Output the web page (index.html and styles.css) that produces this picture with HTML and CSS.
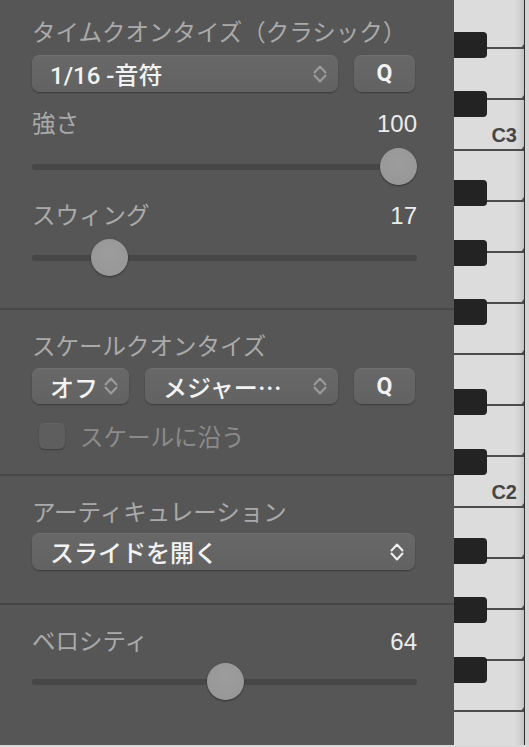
FILE: index.html
```html
<!DOCTYPE html>
<html lang="ja">
<head>
<meta charset="utf-8">
<title>Quantize</title>
<link rel="stylesheet" href="styles.css">
</head>
<body>
<div class="app">
  <div class="panel">
    <section class="sec sec-time">
      <div class="title">タイムクオンタイズ（クラシック）</div>
      <div class="ctrl-row">
        <div class="popup popup-grow">
          <span class="popup-text">1/16 -音符</span>
          <svg class="chev" width="14" height="20" viewBox="0 0 14 20"><polyline points="1.5,8.5 7,2.5 12.5,8.5"/><polyline points="1.5,11.5 7,17.5 12.5,11.5"/></svg>
        </div>
        <div class="btn-q">Q</div>
      </div>
      <div class="label-row row-strength"><span class="label">強さ</span><span class="value">100</span></div>
      <div class="slider slider-strength"><div class="track"></div><div class="thumb" style="left:348px"></div></div>
      <div class="label-row row-swing"><span class="label">スウィング</span><span class="value">17</span></div>
      <div class="slider slider-swing"><div class="track"></div><div class="thumb" style="left:59px"></div></div>
    </section>

    <section class="sec sec-scale">
      <div class="title">スケールクオンタイズ</div>
      <div class="ctrl-row ctrl-row-scale">
        <div class="popup popup-off">
          <span class="popup-text">オフ</span>
          <svg class="chev" width="14" height="20" viewBox="0 0 14 20"><polyline points="1.5,8.5 7,2.5 12.5,8.5"/><polyline points="1.5,11.5 7,17.5 12.5,11.5"/></svg>
        </div>
        <div class="popup popup-grow">
          <span class="popup-text">メジャー<span class="ell">…</span></span>
          <svg class="chev" width="14" height="20" viewBox="0 0 14 20"><polyline points="1.5,8.5 7,2.5 12.5,8.5"/><polyline points="1.5,11.5 7,17.5 12.5,11.5"/></svg>
        </div>
        <div class="btn-q">Q</div>
      </div>
      <div class="check-row">
        <span class="checkbox"></span>
        <span class="check-label">スケールに沿う</span>
      </div>
    </section>

    <section class="sec sec-artic">
      <div class="title">アーティキュレーション</div>
      <div class="ctrl-row ctrl-row-artic">
        <div class="popup popup-grow">
          <span class="popup-text">スライドを開く</span>
          <svg class="chev chev-bright" width="14" height="20" viewBox="0 0 14 20"><polyline points="1.5,8.5 7,2.5 12.5,8.5"/><polyline points="1.5,11.5 7,17.5 12.5,11.5"/></svg>
        </div>
      </div>
    </section>

    <section class="sec sec-vel">
      <div class="label-row row-vel"><span class="label">ベロシティ</span><span class="value">64</span></div>
      <div class="slider slider-vel"><div class="track"></div><div class="thumb" style="left:175px"></div></div>
    </section>
  </div>

  <div class="piano">
    <div class="keys">
      <div class="wkey wkey-top"></div>
      <div class="wkey"></div>
      <div class="wkey"><span class="note">C3</span></div>
      <div class="wkey"></div>
      <div class="wkey"></div>
      <div class="wkey"></div>
      <div class="wkey"></div>
      <div class="wkey"></div>
      <div class="wkey"></div>
      <div class="wkey"><span class="note">C2</span></div>
      <div class="wkey"></div>
      <div class="wkey"></div>
      <div class="wkey"></div>
      <div class="wkey"></div>
      <div class="wkey wkey-last"></div>

      <div class="bkey" style="top:32px"></div>
      <div class="bkey" style="top:91px"></div>
      <div class="bkey" style="top:180px"></div>
      <div class="bkey" style="top:240px"></div>
      <div class="bkey" style="top:299px"></div>
      <div class="bkey" style="top:389px"></div>
      <div class="bkey" style="top:449px"></div>
      <div class="bkey" style="top:538px"></div>
      <div class="bkey" style="top:597px"></div>
      <div class="bkey" style="top:657px"></div>
    </div>
    <div class="edge"></div>
    <div class="rim"></div>
  </div>
</div>
</body>
</html>
```

FILE: styles.css
```css
html, body {
  margin: 0;
  padding: 0;
}
body {
  background: #d9d9d9;
  width: 529px;
  height: 747px;
  overflow: hidden;
}
.app {
  display: flex;
  height: 745px;
  width: 529px;
}
.panel {
  width: 454px;
  background: #565656;
  display: flex;
  flex-direction: column;
  font-family: "Noto Sans CJK JP", sans-serif;
}
.sec {
  display: flex;
  flex-direction: column;
  padding-left: 32px;
  padding-right: 37px;
  border-bottom: 2px solid #474747;
}
.sec-time { padding-top: 17px; padding-bottom: 32px; }
.sec-scale { padding-top: 21px; padding-bottom: 25px; }
.sec-artic { padding-top: 21px; padding-bottom: 33px; }
.sec-vel { padding-top: 21px; border-bottom: none; flex: 1; }

.title, .label {
  font-size: 23.5px;
  line-height: 28px;
  height: 28px;
  color: #aaaaaa;
  white-space: nowrap;
}
.ctrl-row {
  display: flex;
  gap: 16px;
  margin-top: 10px;
  margin-right: 2px;
  height: 37px;
}
.ctrl-row-scale { margin-top: 9px; height: 36px; }
.ctrl-row-artic { margin-top: 8px; }

.popup, .btn-q {
  background: linear-gradient(#686868, #626262);
  border-radius: 8px;
  box-shadow: 0 1px 1.5px rgba(0,0,0,0.35), inset 0 0.5px 0 rgba(255,255,255,0.12);
  display: flex;
  align-items: center;
  color: #f2f2f2;
  font-family: Roboto, "Noto Sans CJK JP", sans-serif;
  font-weight: 500;
  font-size: 24px;
}
.popup {
  padding: 0 11px 0 18px;
}
.popup-grow { flex: 1; }
.popup-off { width: 97px; box-sizing: border-box; flex: none; }
.popup-text {
  flex: 1;
  white-space: nowrap;
  overflow: hidden;
}
.ell {
  font-family: "Noto Sans CJK JP", sans-serif;
}
.chev {
  flex: none;
  fill: none;
  stroke: #9c9c9c;
  stroke-width: 2;
  stroke-linecap: round;
  stroke-linejoin: round;
}
.chev-bright { stroke: #f0f0f0; }
.btn-q {
  width: 61px;
  flex: none;
  justify-content: center;
  font-weight: 700;
  font-size: 23px;
}

.label-row {
  display: flex;
  align-items: baseline;
  justify-content: space-between;
  height: 28px;
}
.row-strength { margin-top: 16px; }
.row-swing { margin-top: 15px; }
.value {
  font-family: "Liberation Sans", sans-serif;
  font-size: 24px;
  color: #ececec;
}

.slider {
  position: relative;
  height: 37px;
  display: flex;
  align-items: center;
}
.slider-strength { margin-top: 12px; }
.slider-swing { margin-top: 11px; }
.slider-vel { margin-top: 9px; }
.track {
  flex: 1;
  height: 6px;
  border-radius: 3px;
  background: #474747;
}
.thumb {
  position: absolute;
  top: 0;
  width: 37px;
  height: 37px;
  border-radius: 50%;
  background: radial-gradient(circle at 50% 40%, #9d9d9d, #959595);
  box-shadow: 0 1px 2px rgba(0,0,0,0.45);
}

.check-row {
  display: flex;
  align-items: center;
  margin-top: 19px;
  padding-left: 7px;
  height: 26px;
  gap: 15px;
}
.checkbox {
  width: 26px;
  height: 26px;
  border-radius: 6px;
  background: #5e5e5e;
  box-shadow: 0 1px 1.5px rgba(0,0,0,0.3), inset 0 0.5px 0 rgba(255,255,255,0.08);
}
.check-label {
  font-size: 23.5px;
  line-height: 28px;
  color: #8b8b8b;
}

.piano {
  flex: 1;
  display: flex;
}
.keys {
  position: relative;
  width: 70px;
  display: flex;
  flex-direction: column;
}
.wkey {
  position: relative;
  flex: none;
  border-bottom: 2px solid #4c4c4c;
  background: linear-gradient(to right, #dcdcdd 86%, #d2d2d3 94%, #c2c2c3);
  display: flex;
  justify-content: flex-end;
  align-items: flex-end;
  padding-right: 7px;
  padding-bottom: 4px;
  box-sizing: border-box;
  height: 51px;
}
.wkey::after {
  content: "";
  position: absolute;
  right: 0;
  bottom: -5px;
  border-right: 3px solid #4c4c4c;
  border-top: 4px solid transparent;
  border-bottom: 4px solid transparent;
}
.wkey-top { height: 49px; }
.wkey-last { flex: 1; border-bottom: none; }
.wkey-last::after { display: none; }
.note {
  font-family: "Liberation Sans", sans-serif;
  font-weight: 700;
  font-size: 20px;
  line-height: 20px;
  color: #464646;
}
.bkey {
  position: absolute;
  left: 0;
  width: 33px;
  height: 26px;
  background: #232323;
  border-radius: 0 4px 4px 0;
}
.edge {
  width: 1px;
  background: #2f2f2f;
}
.rim {
  flex: 1;
  background: #d4d4d4;
}
```
